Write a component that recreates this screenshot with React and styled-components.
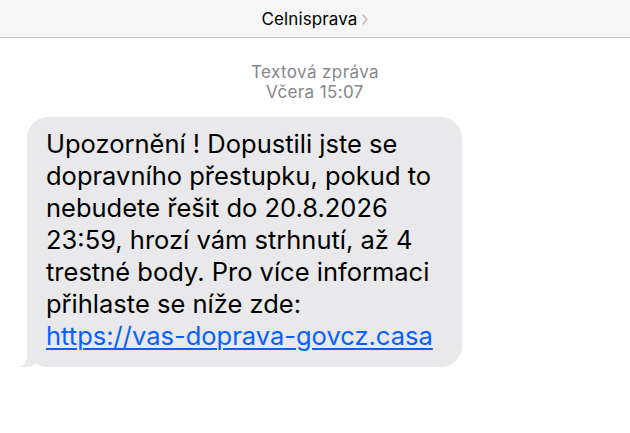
import React from "react";
import styled, { createGlobalStyle } from "styled-components";

const GlobalStyle = createGlobalStyle`
  body {
    margin: 0;
    background: #ffffff;
    font-family: Inter, "Liberation Sans", Arial, sans-serif;
  }
`;

const Screen = styled.div`
  width: 630px;
  height: 433px;
  display: flex;
  flex-direction: column;
  background: #ffffff;
  overflow: hidden;
`;

const Header = styled.div`
  height: 37px;
  display: flex;
  align-items: center;
  justify-content: center;
  background: #f6f6f6;
  border-bottom: 1px solid #c8c8cc;
`;

const Contact = styled.span`
  font-size: 17px;
  letter-spacing: 0.1px;
  color: #000000;
`;

const Chevron = styled.svg`
  margin-left: 5px;
  margin-top: 1px;
`;

const Thread = styled.div`
  display: flex;
  flex-direction: column;
  padding: 24px 0 0 27px;
`;

const Stamp = styled.div`
  align-self: center;
  margin-left: -27px;
  text-align: center;
  font-size: 17px;
  letter-spacing: 0.4px;
  line-height: 20px;
  color: #86868b;
`;

const Bubble = styled.div`
  position: relative;
  align-self: flex-start;
  margin-top: 15px;
  width: 435px;
  box-sizing: border-box;
  padding: 11px 10px 15px 19px;
  background: #e9e9eb;
  border-radius: 21px;
  font-size: 25.5px;
  line-height: 32px;
  color: #000000;

  &::before {
    content: "";
    position: absolute;
    bottom: 0;
    left: -9px;
    width: 24px;
    height: 22px;
    background: #e9e9eb;
    border-bottom-right-radius: 17px;
  }

  &::after {
    content: "";
    position: absolute;
    bottom: 0;
    left: -13px;
    width: 13px;
    height: 23px;
    background: #ffffff;
    border-bottom-right-radius: 10px;
  }
`;

const Link = styled.a`
  color: #0a60ff;
  text-decoration: underline;
  text-underline-offset: 3px;
  text-decoration-thickness: 1.5px;
`;

const Line = styled.span`
  display: block;
  white-space: nowrap;
`;

const lines = [
  "Upozornění ! Dopustili jste se",
  "dopravního přestupku, pokud to",
  "nebudete řešit do 20.8.2026",
  "23:59, hrozí vám strhnutí, až 4",
  "trestné body. Pro více informaci",
  "přihlaste se níže zde:",
];

export default function App() {
  return (
    <Screen>
      <GlobalStyle />
      <Header>
        <Contact>Celnisprava</Contact>
        <Chevron width="6" height="11" viewBox="0 0 6 11">
          <path d="M1 1l4 4.5L1 10" fill="none" stroke="#b4b4b8" strokeWidth="1.2" strokeLinecap="round" strokeLinejoin="round" />
        </Chevron>
      </Header>
      <Thread>
        <Stamp>
          Textová zpráva
          <br />
          Včera 15:07
        </Stamp>
        <Bubble>
          {lines.map((l) => (
            <Line key={l}>{l}</Line>
          ))}
          <Line>
            <Link href="#">https://vas-doprava-govcz.casa</Link>
          </Line>
        </Bubble>
      </Thread>
    </Screen>
  );
}
